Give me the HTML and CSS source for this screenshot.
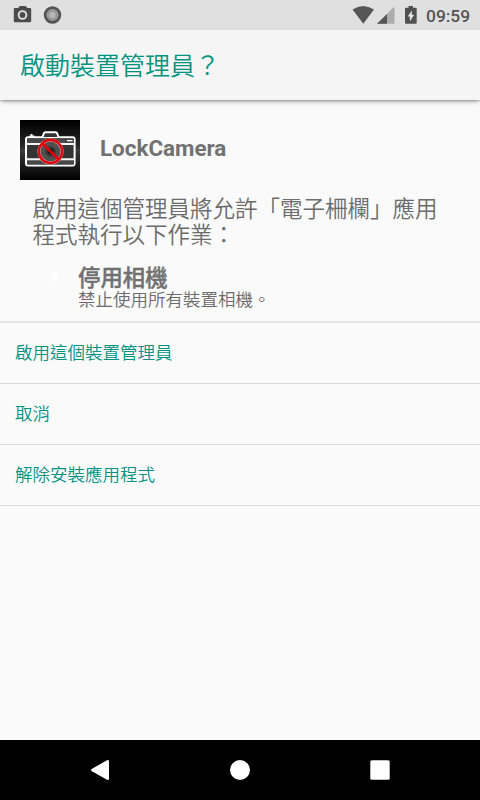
FILE: index.html
```
<!DOCTYPE html>
<html lang="zh-Hant">
<head>
<meta charset="utf-8">
<title>LockCamera</title>
<link rel="stylesheet" href="styles.css">
</head>
<body>
<div class="screen">
  <div class="status">
    <svg class="status-icons" width="420" height="30" viewBox="0 0 420 30" aria-hidden="true">
      <path fill="#4b4b4b" fill-rule="evenodd" d="M15 8h3l2-2h5.500l2 2H30a1.200 1.200 0 0 1 1.200 1.200V21a1.200 1.200 0 0 1-1.200 1.200H15A1.200 1.200 0 0 1 13.800 21V9.200A1.200 1.200 0 0 1 15 8zM22.500 10.200a4.800 4.800 0 1 0 0 9.600 4.800 4.800 0 0 0 0-9.600z"/>
      <circle cx="22.500" cy="15" r="2.900" fill="#4b4b4b"/>
      <circle cx="52.500" cy="15" r="7.400" fill="#999" stroke="#545454" stroke-width="2.700"/>
      <circle cx="52.500" cy="15" r="3" fill="#b8b8b8"/>
      <path fill="#565656" d="M352.500 9.500Q363 2.500 374 9.500L363.300 23.800z"/>
      <path fill="#acacac" d="M394.500 6.500v17.300H377z"/>
      <path fill="#565656" d="M387 13.900v9.900h-10z"/>
      <path fill="#505050" d="M408.500 6h4.500v1.800h2.700a1 1 0 0 1 1 1v14a1 1 0 0 1-1 1H406a1 1 0 0 1-1-1v-14a1 1 0 0 1 1-1h2.500z"/>
      <path fill="#e8e8e8" d="M411.800 10.500v4.200h2.300l-4.200 6.700v-4.800h-2.200z"/>
    </svg>
    <span class="clock">09:59</span>
  </div>
  <header class="title">啟動裝置管理員？</header>
  <main>
    <div class="app">
      <svg width="60" height="60" viewBox="0 0 60 60" aria-hidden="true">
        <defs>
          <linearGradient id="tile" x2="0" y2="1"><stop stop-color="#000"/><stop offset=".45" stop-color="#282828"/><stop offset=".5" stop-color="#3a3a3a"/><stop offset="1" stop-color="#000"/></linearGradient>
        </defs>
        <path fill="url(#tile)" d="M0 0h60v60H0z"/>
        <rect x="6" y="17.300" width="48.600" height="28.200" rx="2" fill="#343434" stroke="#fff" stroke-width="2"/>
        <path d="M7 18.500h47v4.500H7zM7 40h47v4.500H7z" fill="#484848"/>
        <path d="M22.500 17l1.300-3.500q.5-1.200 1.700-1.200h10q1.200 0 1.700 1.200l1.300 3.500" fill="#333" stroke="#fff" stroke-width="2"/>
        <path d="M11.500 14v3" stroke="#fff" stroke-width="2"/>
        <path d="M9.500 16.300h5M47 20.600h5.500" stroke="#fff" stroke-width="1.400"/>
        <path d="M7 24h47M7 39.300h47" stroke="#f4f4f4" stroke-width="2"/>
        <circle cx="30.500" cy="31.500" r="13" fill="#eee"/>
        <circle cx="30.500" cy="31.500" r="10" fill="#505050"/>
        <circle cx="30.500" cy="31.500" r="6" fill="#3a3a3a" stroke="#555"/>
        <circle cx="30.500" cy="31.500" r="3" fill="#161616"/>
        <circle cx="30.500" cy="31.500" r="11.600" fill="none" stroke="#e1000b" stroke-width="2.600"/>
        <path d="M22.500 23.500l16 16" stroke="#e1000b" stroke-width="2.600"/>
      </svg>
      <h1 class="app-name">LockCamera</h1>
    </div>
    <p class="message">啟用這個管理員將允許「電子柵欄」應用程式執行以下作業：</p>
    <div class="policy">
      <span class="bullet"></span>
      <div>
        <h2 class="policy-name">停用相機</h2>
        <p class="policy-text">禁止使用所有裝置相機。</p>
      </div>
    </div>
    <div class="actions">
      <div class="action">啟用這個裝置管理員</div>
      <div class="action">取消</div>
      <div class="action">解除安裝應用程式</div>
    </div>
  </main>
  <nav class="navbar">
    <svg width="480" height="60" viewBox="0 0 480 60" fill="#fff" aria-hidden="true">
      <path d="M107 20.300q2-1 2 1v17.400q0 2-2 1L92 31.200q-2-1.200 0-2.400z"/>
      <circle cx="240" cy="30" r="10"/>
      <rect x="370.300" y="20.300" width="19.400" height="19.400" rx="1.500"/>
    </svg>
  </nav>
</div>
</body>
</html>
```
FILE: styles.css
```
* { box-sizing: border-box; }
body, h1, h2, p { margin: 0; }
svg { display: block; flex: none; }
.screen {
  width: 480px;
  height: 800px;
  display: flex;
  flex-direction: column;
  overflow: hidden;
  background: #fafafa;
  color: #6b6b6b;
  font-family: Roboto, "Noto Sans CJK TC", sans-serif;
  font-weight: 350;
}
.status {
  flex: none;
  display: flex;
  height: 30px;
  background: #e0e0e0;
}
.clock {
  padding-left: 6px;
  color: #545454;
  font-size: 17.4px;
  font-weight: 500;
  line-height: 32px;
}
.title {
  flex: none;
  height: 70px;
  padding-left: 20px;
  background: #f5f5f5;
  box-shadow: 0 3px 4px -1px rgba(0, 0, 0, .3), 0 1px 1px rgba(0, 0, 0, .12);
  color: #009382;
  font-size: 25px;
  line-height: 73px;
}
main { flex: 1; }
.app {
  display: flex;
  align-items: center;
  gap: 20px;
  padding: 20px 20px 0;
}
.app-name {
  padding-bottom: 4px;
  color: #717171;
  font-size: 22.4px;
  font-weight: 700;
  line-height: 26px;
}
.message {
  width: 420px;
  margin: 16px 0 0 32.5px;
  font-size: 22.5px;
  line-height: 26px;
}
.policy {
  display: flex;
  margin-top: 17px;
  padding-left: 51px;
}
.bullet {
  flex: none;
  width: 8px;
  height: 8px;
  margin: 8px 19px 0 0;
  border-radius: 50%;
  background: #fff;
}
.policy-name {
  color: #707070;
  font-size: 22.4px;
  font-weight: 500;
  line-height: 26px;
  -webkit-text-stroke: .4px #707070;
}
.policy-text {
  margin-top: -1px;
  font-size: 17.5px;
  line-height: 20px;
}
.actions {
  margin-top: 11px;
  border-top: 2px solid #e6e6e6;
}
.action {
  height: 61px;
  padding-left: 15px;
  border-bottom: 1px solid #dadada;
  color: #009382;
  font-size: 17.5px;
  line-height: 61px;
}
.navbar {
  flex: none;
  height: 60px;
  background: #000;
}
```
